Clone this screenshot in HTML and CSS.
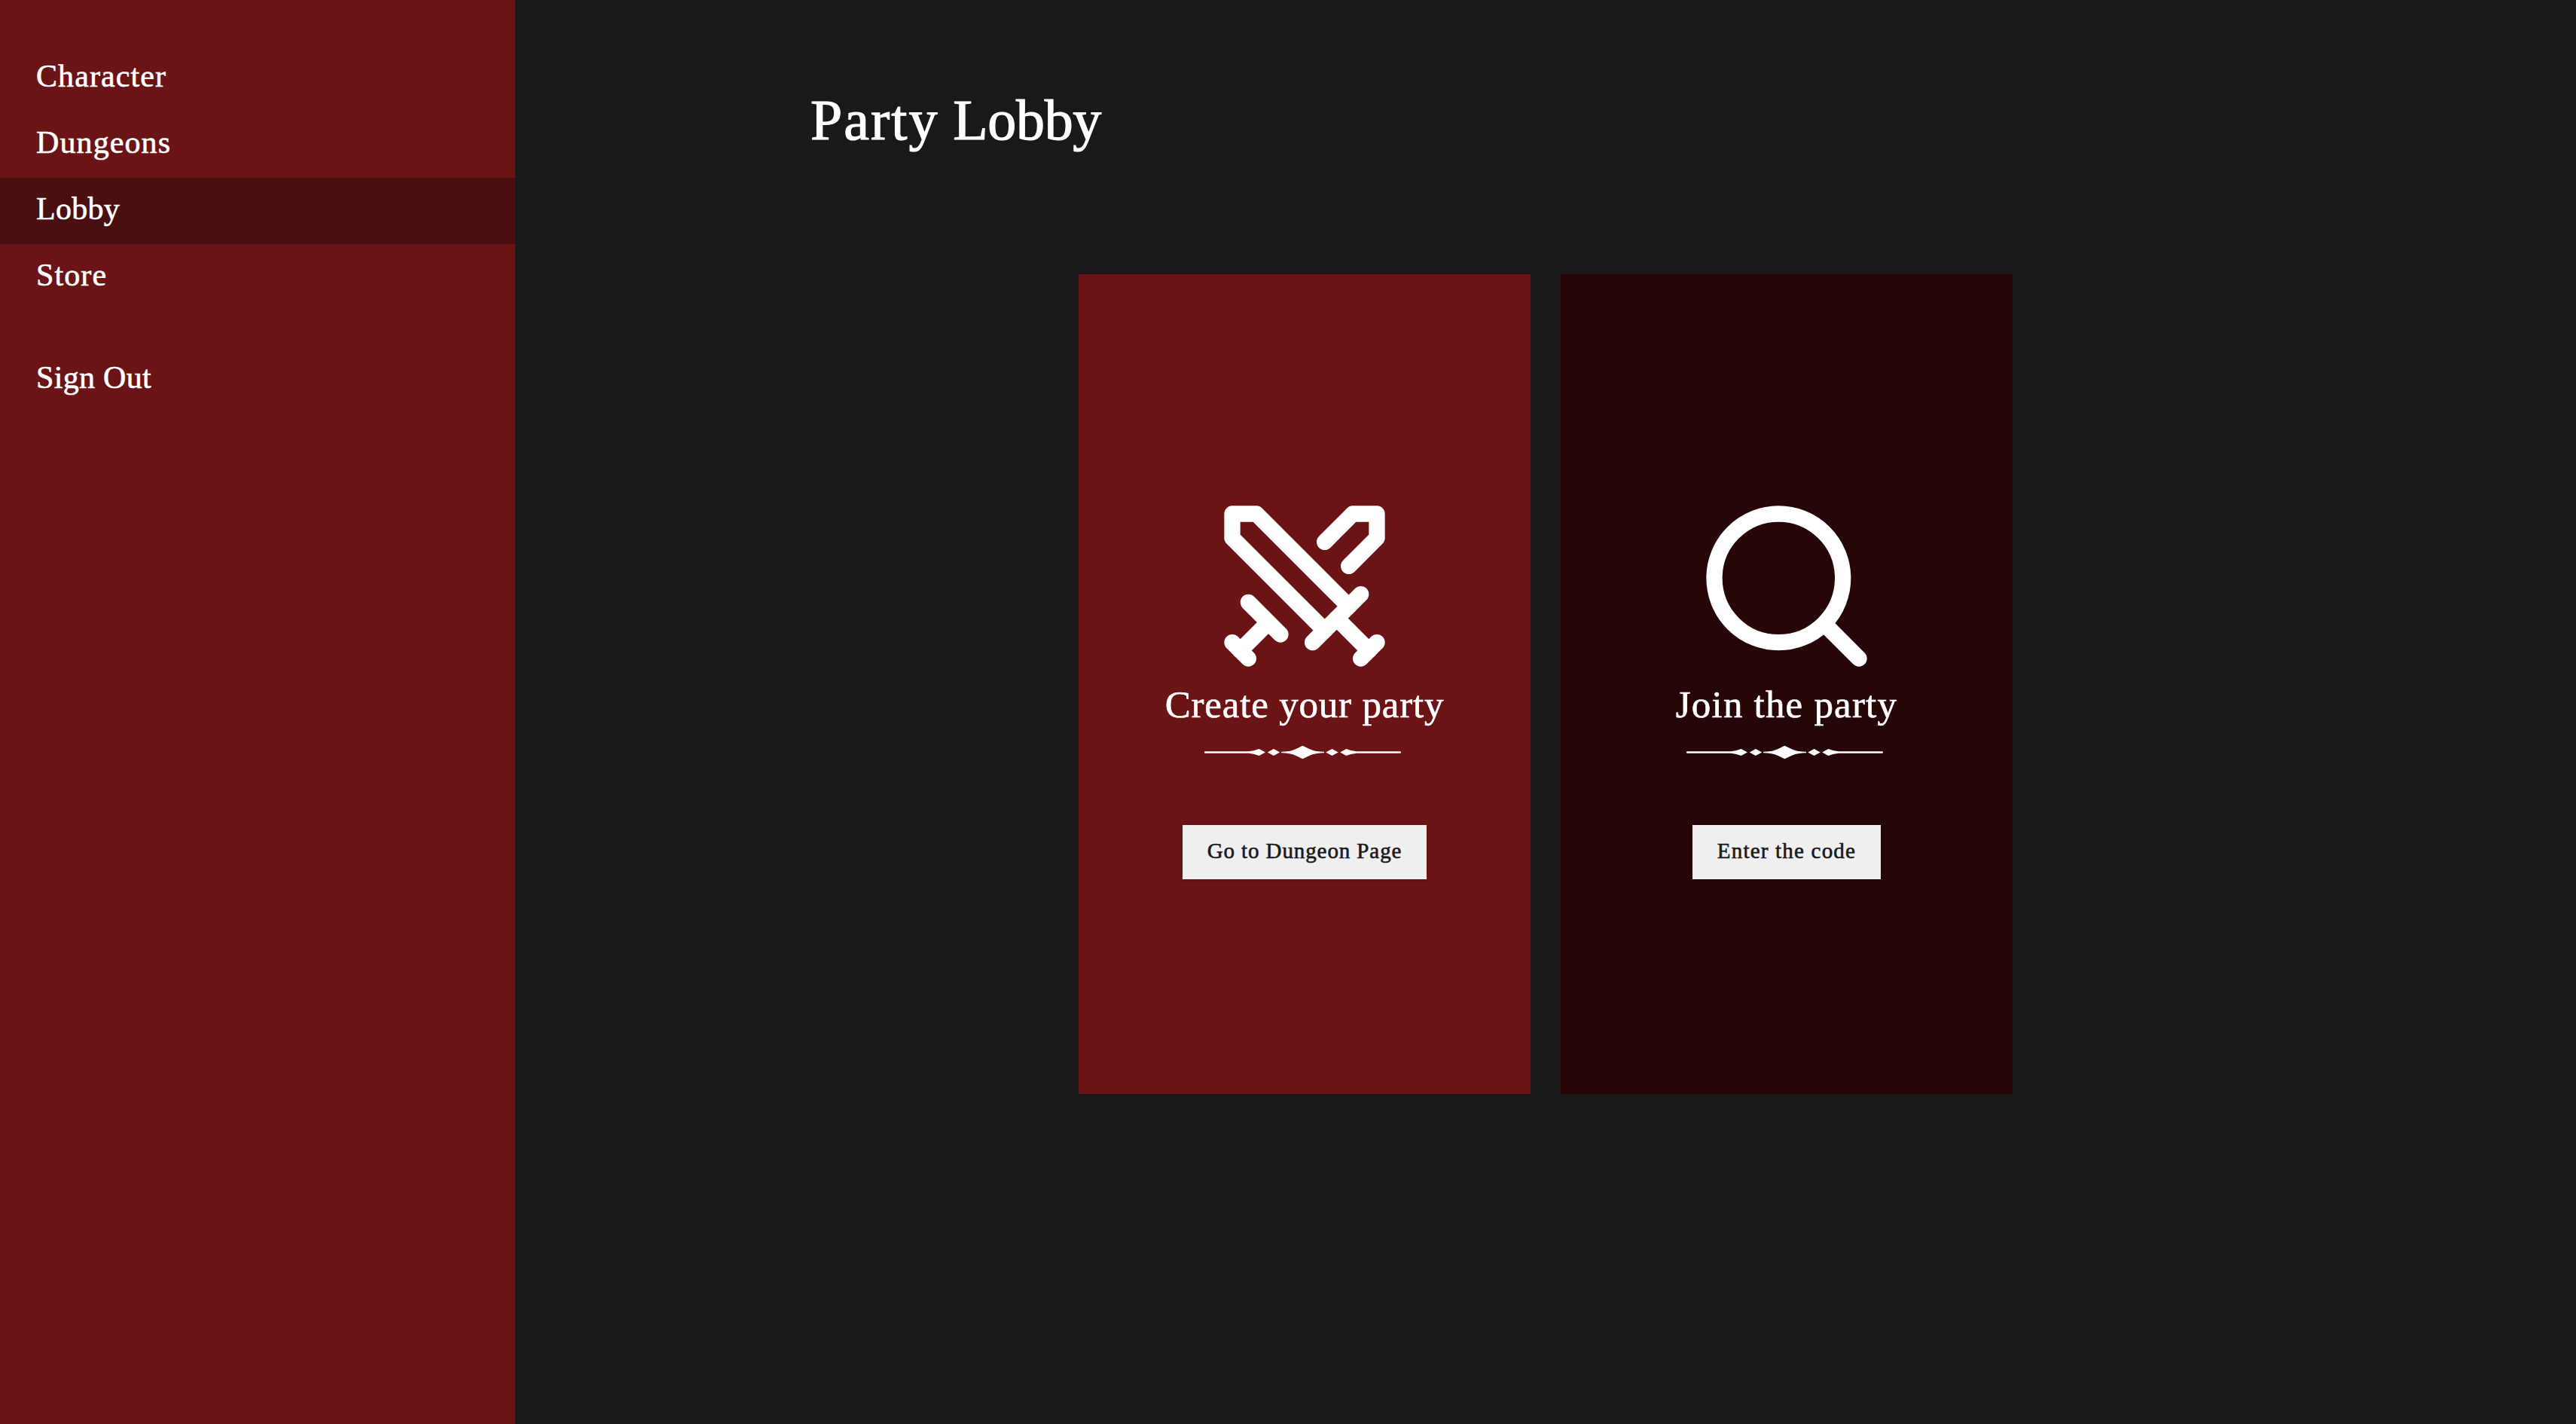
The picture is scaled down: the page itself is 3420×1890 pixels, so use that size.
FILE: index.html
```html
<!DOCTYPE html>
<html lang="en">
<head>
    <meta charset="UTF-8">
    <meta name="viewport" content="width=device-width, initial-scale=1.0">
    <title>Party Lobby</title>
    <link rel="stylesheet" href="styles.css">
</head>
<body>

    <!-- Sidebar -->
    <nav class="sidebar">
        <a class="nav-link wide" href="#">Character</a>
        <a class="nav-link wide" href="#">Dungeons</a>
        <a class="nav-link active" href="#">Lobby</a>
        <a class="nav-link wide" href="#">Store</a>
        <a class="nav-link sign-out" href="#">Sign Out</a>
    </nav>

    <!-- Lobby -->
    <main class="content">
        <h1><span>Party</span> Lobby</h1>

        <div class="cards">
            <section class="card card-create">
                <svg class="icon" viewBox="0 0 24 24">
                    <polyline points="14.5 17.5 3 6 3 3 6 3 17.5 14.5"/>
                    <line x1="13" y1="19" x2="19" y2="13"/>
                    <line x1="16" y1="16" x2="20" y2="20"/>
                    <line x1="19" y1="21" x2="21" y2="19"/>
                    <polyline points="14.5 6.5 18 3 21 3 21 6 17.5 9.5"/>
                    <line x1="5" y1="14" x2="9" y2="18"/>
                    <line x1="7" y1="17" x2="4" y2="20"/>
                    <line x1="3" y1="19" x2="5" y2="21"/>
                </svg>
                <h2>Create your party</h2>
                <svg class="divider" viewBox="-2 0 268 20">
                    <path d="M0 9.2H58Q66 8.4 71.7 6L80 10.5L71.7 15Q66 12.6 58 11.8H0Q-1 11.8 -1 10.5T0 9.2Z"/>
                    <path d="M82.7 10.5L91 6L99.3 10.5L91 15Z"/>
                    <path d="M101 9.8Q113 9.8 120 6.2L129.4 1.8L138.8 6.2Q146 9.8 158 9.8V11.2Q146 11.2 138.8 14.8L129.4 19.2L120 14.8Q113 11.2 101 11.2Z"/>
                    <path d="M160.2 10.5L168.5 6L176.8 10.5L168.5 15Z"/>
                    <path d="M259 9.2H201Q193 8.4 187.3 6L179.2 10.5L187.3 15Q193 12.6 201 11.8H259Q260 11.8 260 10.5T259 9.2Z"/>
                </svg>
                <button class="btn-dungeon">Go to Dungeon Page</button>
            </section>

            <section class="card card-join">
                <svg class="icon" viewBox="0 0 24 24">
                    <circle cx="11" cy="11" r="8"/>
                    <path d="m21 21-4.3-4.3"/>
                </svg>
                <h2>Join the party</h2>
                <svg class="divider" viewBox="-2 0 268 20">
                    <path d="M0 9.2H58Q66 8.4 71.7 6L80 10.5L71.7 15Q66 12.6 58 11.8H0Q-1 11.8 -1 10.5T0 9.2Z"/>
                    <path d="M82.7 10.5L91 6L99.3 10.5L91 15Z"/>
                    <path d="M101 9.8Q113 9.8 120 6.2L129.4 1.8L138.8 6.2Q146 9.8 158 9.8V11.2Q146 11.2 138.8 14.8L129.4 19.2L120 14.8Q113 11.2 101 11.2Z"/>
                    <path d="M160.2 10.5L168.5 6L176.8 10.5L168.5 15Z"/>
                    <path d="M259 9.2H201Q193 8.4 187.3 6L179.2 10.5L187.3 15Q193 12.6 201 11.8H259Q260 11.8 260 10.5T259 9.2Z"/>
                </svg>
                <button class="btn-code">Enter the code</button>
            </section>
        </div>
    </main>

</body>
</html>
```

FILE: styles.css
```css
* {
    box-sizing: border-box;
}

body {
    margin: 0;
    min-height: 100vh;
    display: flex;
    background-color: #19191b;
    color: white;
    font-family: 'Source Serif Pro', 'Liberation Serif', serif;
    -webkit-text-stroke: 0.6px currentColor; /* Slightly heavier text */
}

/* Sidebar */
.sidebar {
    width: 20%;
    padding-top: 60px;
    display: flex;
    flex-direction: column;
    background-color: #6b1416;
}

.nav-link {
    height: 88px;
    padding-left: 48px;
    font-size: 42px;
    line-height: 82px;
    letter-spacing: 0.3px;
    color: white;
    text-decoration: none;
}

.nav-link.wide {
    letter-spacing: 1.1px;
}

.nav-link.active {
    background-color: #4a0f0f;
}

.sign-out {
    margin-top: 48px;
}

/* Main content */
.content {
    flex: 1;
    padding: 111px 392px 0;
}

h1 {
    margin: 0;
    font-size: 76px;
    line-height: 96px;
    font-weight: normal;
    letter-spacing: -0.3px;
    -webkit-text-stroke-width: 1.2px;
}

h1 span {
    letter-spacing: 2px;
}

.cards {
    margin-top: 157px;
    display: flex;
    justify-content: center;
    gap: 40px;
}

.card {
    width: 600px;
    height: 1088px;
    padding-top: 286px;
    display: flex;
    flex-direction: column;
    align-items: center;
}

.card-create {
    background-color: #6b1416;
}

.card-join {
    background-color: #270608;
}

.icon {
    width: 256px;
    height: 256px;
    fill: none;
    stroke: white;
    stroke-width: 2;
    stroke-linecap: round;
    stroke-linejoin: round;
}

h2 {
    margin: 0;
    font-size: 51px;
    line-height: 58px;
    font-weight: normal;
    letter-spacing: 0.8px;
}

.card-join h2 {
    letter-spacing: 1.2px;
}

.divider {
    width: 268px;
    height: 20px;
    margin-top: 24px;
    fill: white;
}

button {
    height: 72px;
    margin-top: 87px;
    padding: 0 0 4px;
    border: none;
    background-color: #efefef;
    color: #19191b;
    font-family: inherit;
    font-size: 29px;
    line-height: 68px;
    box-shadow: 0 2px 6px rgba(0, 0, 0, 0.15);
    cursor: pointer;
}

.btn-dungeon {
    width: 324px;
    letter-spacing: 0.9px;
}

.btn-code {
    width: 250px;
    letter-spacing: 1.2px;
}
```
